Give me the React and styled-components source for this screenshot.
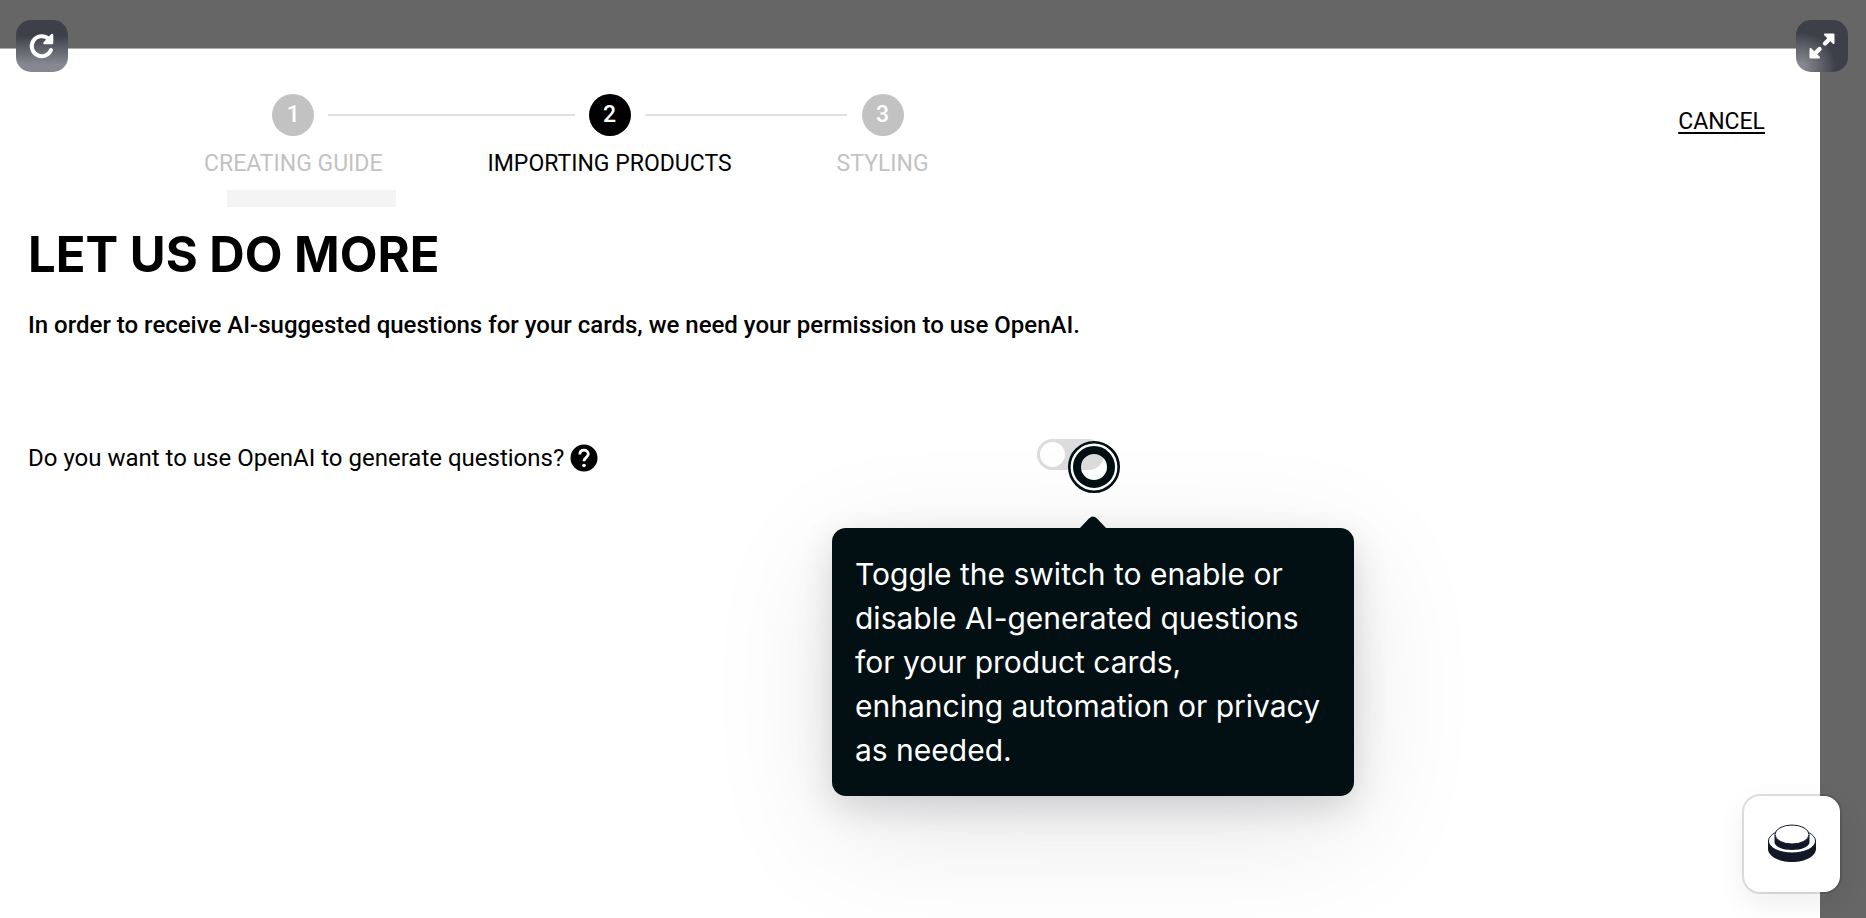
import React, {useState} from "react";
import styled, {createGlobalStyle, css} from "styled-components";

const GlobalStyle = createGlobalStyle`
  * {
    box-sizing: border-box;
  }
  body {
    margin: 0;
    background: #666666;
    color: #000000;
    font-family: Roboto, "Liberation Sans", sans-serif;
  }
  button {
    border: none;
    padding: 0;
    cursor: pointer;
  }
`;

const Backdrop = styled.div`
  display: flex;
  min-height: 100vh;
  padding: 48px 46px 0 0;
  background: #666666;
`;

const Panel = styled.main`
  flex: 1;
  padding: 45px 55px 0 28px;
  border-top: 1px solid #ababab;
  background: #ffffff;
`;

const Header = styled.header`
  display: flex;
  justify-content: space-between;
  align-items: flex-start;
`;

const Steps = styled.ol`
  display: flex;
  gap: 105px;
  margin: 0;
  padding: 0 0 0 176px;
  list-style: none;
`;

const Step = styled.li`
  position: relative;
  display: flex;
  flex-direction: column;
  align-items: center;
  gap: 14px;
  color: ${({$active}) => $active ? "#000000" : "#c2c2c2"};
  font-size: 23px;
  line-height: 28px;
  white-space: nowrap;
`;

const StepNumber = styled.span`
  display: flex;
  justify-content: center;
  align-items: center;
  width: 42px;
  height: 42px;
  border-radius: 50%;
  background: ${({$active}) => $active ? "#000000" : "#c2c2c2"};
  color: #ffffff;
  font-weight: 500;
`;

/* line that runs from this step's number to the next one */
const Connector = styled.span`
  position: absolute;
  top: 20px;
  left: calc(50% + 35px);
  width: ${({$length}) => $length}px;
  height: 2px;
  background: #e0e0e0;
`;

const Cancel = styled.a`
  margin-top: 14px;
  color: #000000;
  font-size: 23px;
  line-height: 28px;
  text-underline-offset: 3px;
`;

const Placeholder = styled.div`
  width: 169px;
  height: 17px;
  margin: 12px 0 0 199px;
  background: #f4f4f4;
`;

const Title = styled.h1`
  margin: 16px 0 0;
  font-family: Inter, "Liberation Sans", sans-serif;
  font-size: 49px;
  font-weight: 700;
  line-height: 64px;
`;

const Lead = styled.p`
  margin: 22px 0 0;
  font-size: 24px;
  font-weight: 500;
  line-height: 32px;
`;

const Question = styled.div`
  display: flex;
  align-items: center;
  margin-top: 97px;
`;

const QuestionText = styled.div`
  display: flex;
  align-items: center;
  flex: 0 0 1009px;
  gap: 6px;
  font-size: 24px;
  line-height: 40px;
`;

const HelpButton = styled.button`
  display: flex;
  background: none;
`;

const SwitchWrap = styled.div`
  position: relative;
  display: flex;
`;

const Switch = styled.input`
  appearance: none;
  display: flex;
  width: 67px;
  height: 31px;
  margin: 0 0 8px;
  padding: 3px;
  border-radius: 16px;
  background: #dcdcdc;
  cursor: pointer;
  &::before {
    content: "";
    width: 25px;
    height: 25px;
    border-radius: 50%;
    background: #ffffff;
  }
  &:checked {
    justify-content: flex-end;
    background: #000000;
  }
`;

const Hotspot = styled.span`
  position: absolute;
  top: 2px;
  left: 31px;
  width: 52px;
  height: 52px;
  pointer-events: none;
`;

const Tooltip = styled.div`
  position: absolute;
  top: 89px;
  left: 56px;
  width: 522px;
  padding: 24px 23px;
  border-radius: 14px;
  transform: translateX(-50%);
  background: #021014;
  color: #ffffff;
  box-shadow: 0 32px 128px rgba(0, 10, 20, 0.1), 0 12px 36px rgba(10, 5, 20, 0.14);
  font-family: Inter, "Liberation Sans", sans-serif;
  font-size: 30px;
  line-height: 44px;
`;

const Arrow = styled.svg`
  position: absolute;
  top: -12px;
  left: 50%;
  margin-left: -15px;
`;

const cornerButton = css`
  position: fixed;
  display: flex;
  justify-content: center;
  align-items: center;
`;

const PlayerButton = styled.button`
  ${cornerButton}
  top: 20px;
  ${({$side}) => $side}: ${({$side}) => $side === "left" ? 16 : 18}px;
  width: 52px;
  height: 52px;
  border-radius: 15px;
  background: ${({$side}) => $side === "left"
    ? "linear-gradient(#3d4048 30%, #858890 85%)"
    : "radial-gradient(circle at 10% 90%, #85888f 5%, #3d4048 52%)"};
`;

const Launcher = styled.button`
  ${cornerButton}
  right: 26px;
  bottom: 26px;
  width: 96px;
  height: 96px;
  border-radius: 16px;
  background: #ffffff;
  box-shadow: 0 0 0 2px rgba(0, 0, 0, 0.12), 0 10px 30px rgba(0, 20, 20, 0.08);
`;

const STEPS = [
    {label: "CREATING GUIDE", length: 247},
    {label: "IMPORTING PRODUCTS", active: true, length: 202},
    {label: "STYLING"},
];

const ReplayIcon = () => (
    <svg width="28" height="28" viewBox="0 0 28 28" fill="none" aria-hidden="true">
        <path d="M23 18A10 10 0 1 1 19.500 6" stroke="#fff" strokeWidth="4" strokeLinecap="round"/>
        <path d="M24 3v8h-7.500z" fill="#fff" stroke="#fff" strokeWidth="2.500" strokeLinejoin="round"/>
    </svg>
);

const ExpandIcon = () => (
    <svg width="28" height="28" viewBox="0 0 28 28" fill="none" stroke="#fff" strokeLinecap="round" strokeLinejoin="round" aria-hidden="true">
        <path d="M17 11.500l5-5M11.500 17l-5 5" strokeWidth="4.400"/>
        <path d="M17 2.500h8.500V11zM2.500 17v8.500H11z" fill="#fff" strokeWidth="2"/>
    </svg>
);

const HelpIcon = () => (
    <svg width="28" height="28" viewBox="0 0 28 28" fill="none" aria-hidden="true">
        <circle cx="14" cy="14" r="13.500" fill="#000"/>
        <path d="M9.800 10.500C9.800 7.500 11.700 6.200 14 6.200s4.300 1.400 4.300 3.900c0 3.300-4.300 3.300-4.300 7.200" stroke="#fff" strokeWidth="2.800"/>
        <circle cx="14" cy="21.500" r="1.800" fill="#fff"/>
    </svg>
);

const LauncherIcon = () => (
    <svg width="50" height="40" viewBox="0 0 50 40" aria-hidden="true">
        <path d="M1 17v8c0 7 10.700 13 24 13s24-6 24-13v-8z" fill="#111827"/>
        <ellipse cx="25" cy="17" rx="23.500" ry="12" fill="#fff" stroke="#111827"/>
        <path d="M7.500 11v7c0 4.500 8 8 17.500 8s17.500-3.500 17.500-8v-7z" fill="#111827"/>
        <ellipse cx="25" cy="10.500" rx="17" ry="9.500" fill="#fff" stroke="#111827"/>
    </svg>
);

const App = () => {
    const [enabled, setEnabled] = useState(false);

    return (
        <>
            <GlobalStyle/>
            <Backdrop>
                <Panel>
                    <Header>
                        <Steps>
                            {STEPS.map(({label, active, length}, index) => (
                                <Step key={label} $active={active}>
                                    <StepNumber $active={active}>{index + 1}</StepNumber>
                                    {label}
                                    {length && <Connector $length={length}/>}
                                </Step>
                            ))}
                        </Steps>
                        <Cancel href="#">CANCEL</Cancel>
                    </Header>
                    <Placeholder/>
                    <Title>LET US DO MORE</Title>
                    <Lead>In order to receive AI-suggested questions for your cards, we need your permission to use OpenAI.</Lead>
                    <Question>
                        <QuestionText>
                            <label htmlFor="openai">Do you want to use OpenAI to generate questions?</label>
                            <HelpButton type="button" aria-label="Help"><HelpIcon/></HelpButton>
                        </QuestionText>
                        <SwitchWrap>
                            <Switch
                                id="openai"
                                type="checkbox"
                                role="switch"
                                checked={enabled}
                                onChange={() => setEnabled(state => !state)}
                            />
                            <Hotspot>
                                <svg width="52" height="52" viewBox="0 0 52 52" fill="none" aria-hidden="true">
                                    <circle cx="26" cy="26" r="22.500" stroke="#fff" strokeWidth="4"/>
                                    <circle cx="26" cy="26" r="24.700" stroke="#021014" strokeWidth="2.600"/>
                                    <circle cx="26" cy="26" r="17" stroke="#021014" strokeWidth="8"/>
                                </svg>
                            </Hotspot>
                            <Tooltip role="tooltip">
                                <Arrow width="30" height="13" viewBox="0 0 30 13" aria-hidden="true">
                                    <path d="M1 13L11 2.500Q15-1.500 19 2.500L29 13z" fill="#021014"/>
                                </Arrow>
                                Toggle the switch to enable or disable AI-generated questions for your product cards, enhancing automation or privacy as needed.
                            </Tooltip>
                        </SwitchWrap>
                    </Question>
                </Panel>
            </Backdrop>
            <PlayerButton type="button" $side="left" aria-label="Restart"><ReplayIcon/></PlayerButton>
            <PlayerButton type="button" $side="right" aria-label="Full screen"><ExpandIcon/></PlayerButton>
            <Launcher type="button" aria-label="Open launcher"><LauncherIcon/></Launcher>
        </>
    );
};

export default App;
